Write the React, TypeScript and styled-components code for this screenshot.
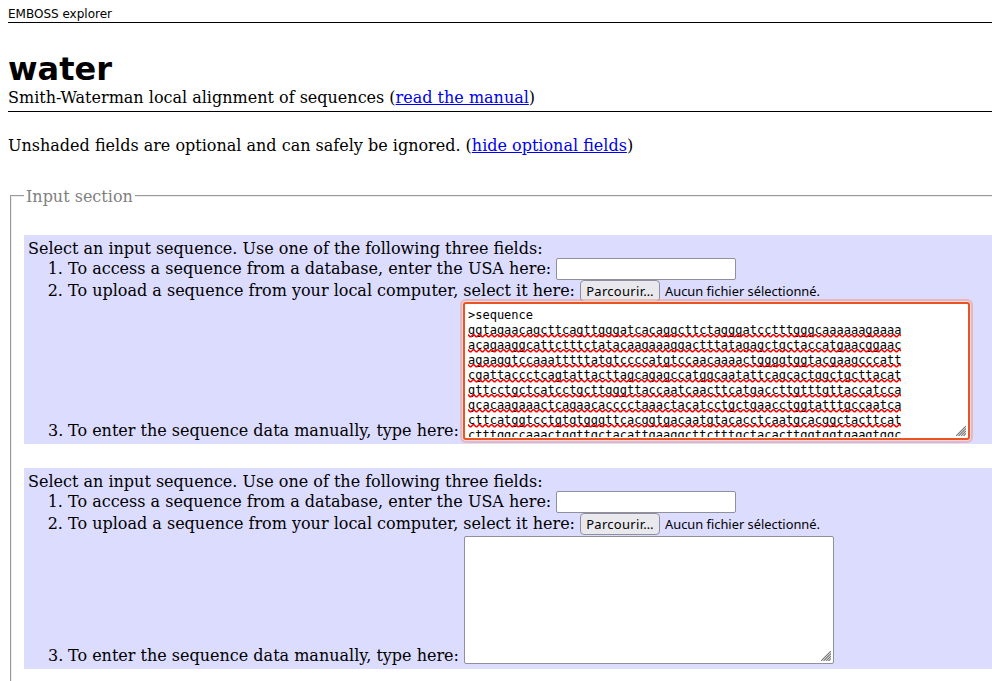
import React from 'react';
import styled, { createGlobalStyle } from 'styled-components';

const Global = createGlobalStyle`
  body { margin: 0; background: #fff; overflow: hidden; }
`;

const Page = styled.main`
  height: 681px;
  box-sizing: border-box;
  padding-left: 8px;
  overflow: hidden;
  font: 16px/20px "DejaVu Serif", serif;
  color: #000;
  white-space: nowrap;
`;

const Banner = styled.header`
  height: 22px;
  box-sizing: content-box;
  border-bottom: 1px solid #000;
  font: 12px/29px "DejaVu Sans", sans-serif;
`;

const Heading = styled.div`
  height: 88px;
  border-bottom: 1px solid #000;
`;

const Title = styled.h1`
  margin: 0 0 -1px;
  padding-top: 27px;
  font: bold 32px/39px "DejaVu Sans", sans-serif;
`;

const Text = styled.p`
  margin: 0;
`;

const Note = styled(Text)`
  margin-top: 24px;
`;

const Link = styled.a`
  color: #0000ee;
  text-decoration: underline;
`;

const Section = styled.fieldset`
  width: 1100px;
  height: 540px;
  box-sizing: border-box;
  margin: 29px 0 0 2px;
  padding: 0 12px;
  border: 2px groove #ededed;
`;

const Legend = styled.legend`
  padding: 2px 2px 0;
  color: #808080;
`;

const Field = styled.div<{ $height: number }>`
  height: ${(p) => p.$height}px;
  box-sizing: border-box;
  margin: 28px 0 24px;
  padding: 4px 4px 0;
  background: #dcdcff;

  & + & { margin-top: 0; }
`;

const Steps = styled.ol`
  margin: 0;
  padding-left: 40px;
`;

const Step = styled.li`
  height: 22px;
`;

const StepRow = styled.div`
  display: flex;
  align-items: flex-start;
`;

const Label = styled.span<{ $width: number }>`
  width: ${(p) => p.$width}px;
  flex: none;
`;

const TextInput = styled.input`
  width: 180px;
  height: 22px;
  box-sizing: border-box;
  margin: -1px 0 0;
  border: 1px solid #8f8f9d;
  border-radius: 2px;
  background: #fff;
`;

const Browse = styled.button`
  width: 80px;
  height: 22px;
  box-sizing: border-box;
  margin: -1px 0 0;
  padding: 0;
  border: 1px solid #8f8f9d;
  border-radius: 4px;
  background: #e9e9ed;
  color: #000;
  font: 13px/19px "Noto Sans", sans-serif;
  letter-spacing: 0.3px;
`;

const FileStatus = styled.span`
  margin: -1px 0 0 5px;
  font: 12.85px/22px "Noto Sans", sans-serif;
`;

const Manual = styled.div<{ $height: number }>`
  display: flex;
  align-items: flex-end;
  height: ${(p) => p.$height}px;
  margin-top: -1px;
`;

const ManualLabel = styled.span<{ $width: number; $indent?: number; $drop: number }>`
  width: ${(p) => p.$width}px;
  margin: 0 0 ${(p) => -p.$drop}px ${(p) => p.$indent ?? 0}px;
  flex: none;
`;

const Area = styled.div<{ $focused?: boolean }>`
  position: relative;
  flex: none;
  width: ${(p) => (p.$focused ? 507 : 370)}px;
  height: ${(p) => (p.$focused ? 138 : 128)}px;
  margin-left: ${(p) => (p.$focused ? -1 : 0)}px;
  box-sizing: border-box;
  padding: ${(p) => (p.$focused ? '4px 3px 0' : '2px')};
  border: ${(p) => (p.$focused ? '2px solid #e95420' : '1px solid #8f8f9d')};
  border-radius: ${(p) => (p.$focused ? 3 : 2)}px;
  box-shadow: ${(p) => (p.$focused ? '0 0 0 1px rgba(245, 225, 235, .8), 0 0 0 3px rgba(240, 145, 130, .5)' : 'none')};
  background: #fff;
  font: 12px/15px "DejaVu Sans Mono", monospace;
`;

const SequenceText = styled.div`
  height: 129px;
  overflow: hidden;
`;

const SequenceLine = styled.div<{ $marked?: boolean }>`
  position: relative;
  width: 433px;
  height: 15px;

  &::after {
    content: "";
    display: ${(p) => (p.$marked ? 'block' : 'none')};
    position: absolute;
    left: 0;
    right: 0;
    top: 11px;
    height: 4px;
    background: url("data:image/svg+xml,%3Csvg xmlns='http://www.w3.org/2000/svg' width='6' height='4'%3E%3Cpath fill='none' stroke='red' stroke-width='1.5' d='M-1.5 .8H0L2 2.8H3L5 .8H7'/%3E%3C/svg%3E") repeat-x;
  }
`;

const Grip = styled.svg`
  position: absolute;
  right: 2px;
  bottom: 2px;
`;

const lines = [
  'ggtagaacagcttcagttgggatcacaggcttctagggatcctttgggcaaaaaagaaaa',
  'acagaaggcattctttctatacaagaaaggactttatagagctgctaccatgaacggaac',
  'agaaggtccaaatttttatgtccccatgtccaacaaaactggggtggtacgaagcccatt',
  'cgattaccctcagtattacttagcagagccatggcaatattcagcactggctgcttacat',
  'gttcctgctcatcctgcttgggttaccaatcaacttcatgaccttgtttgttaccatcca',
  'gcacaagaaactcagaacacccctaaactacatcctgctgaacctggtatttgccaatca',
  'cttcatggtcctgtgtgggttcacggtgacaatgtacacctcaatgcacggctacttcat',
  'ctttggccaaactggttgctacattgaaggcttctttgctacacttggtggtgaagtggc',
];

function SequenceField({ sequence }: { sequence?: string[] }) {
  const drop = sequence ? 1 : 2;
  return (
    <Field $height={sequence ? 209 : 201}>
      <Text>Select an input sequence. Use one of the following three fields:</Text>
      <Steps>
        <Step>
          <StepRow>
            <Label $width={488}>To access a sequence from a database, enter the USA here:</Label>
            <TextInput />
          </StepRow>
        </Step>
        <Step>
          <StepRow>
            <Label $width={512}>To upload a sequence from your local computer, select it here:</Label>
            <Browse>Parcourir…</Browse>
            <FileStatus>Aucun fichier sélectionné.</FileStatus>
          </StepRow>
        </Step>
      </Steps>
      <Manual $height={sequence ? 138 : 129}>
        <ManualLabel $width={20} $indent={20} $drop={drop}>3.</ManualLabel>
        <ManualLabel $width={396} $drop={drop}>To enter the sequence data manually, type here:</ManualLabel>
        <Area $focused={!!sequence}>
          {sequence && (
            <SequenceText>
              <SequenceLine>&gt;sequence</SequenceLine>
              {sequence.map((line) => <SequenceLine key={line} $marked>{line}</SequenceLine>)}
            </SequenceText>
          )}
          <Grip width="10" height="10" viewBox="0 0 10 10" stroke="#777" strokeWidth="1.1">
            <path d="M0 10L10 0M2.5 10L10 2.5M5 10L10 5M7.5 10L10 7.5" />
          </Grip>
        </Area>
      </Manual>
    </Field>
  );
}

export default function App() {
  return (
    <Page>
      <Global />
      <Banner>EMBOSS explorer</Banner>
      <Heading>
        <Title>water</Title>
        <Text>Smith-Waterman local alignment of sequences (<Link href="#">read the manual</Link>)</Text>
      </Heading>
      <Note>Unshaded fields are optional and can safely be ignored. (<Link href="#">hide optional fields</Link>)</Note>
      <Section>
        <Legend>Input section</Legend>
        <SequenceField sequence={lines} />
        <SequenceField />
      </Section>
    </Page>
  );
}
